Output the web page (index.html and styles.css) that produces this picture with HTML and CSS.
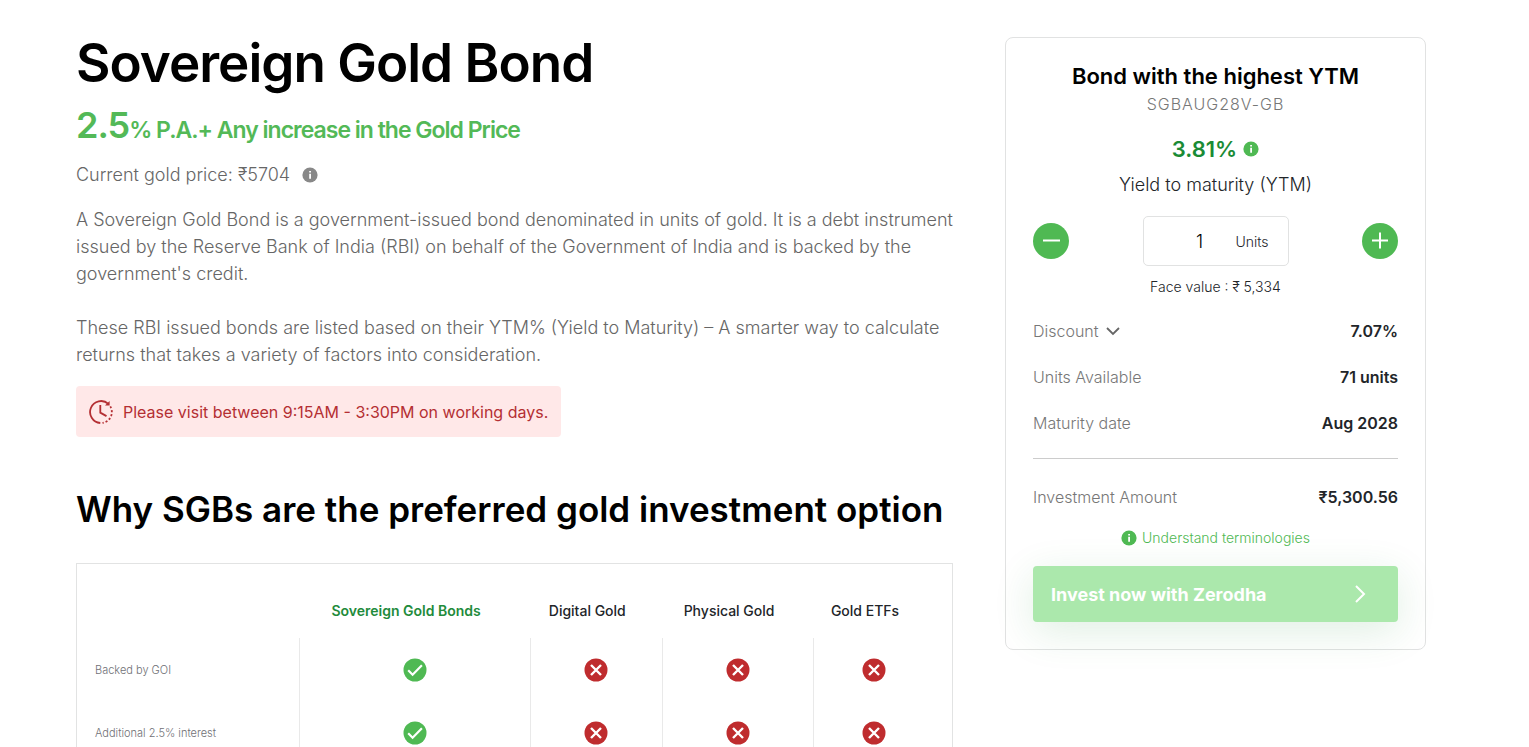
FILE: index.html
```html
<!DOCTYPE html>
<html lang="en">
<head>
<meta charset="utf-8">
<meta name="viewport" content="width=device-width, initial-scale=1">
<title>Sovereign Gold Bond</title>
<link rel="stylesheet" href="styles.css">
</head>
<body>
<svg class="sprite" aria-hidden="true">
  <symbol id="info" viewBox="0 0 16 16"><circle cx="8" cy="8" r="7.6" fill="currentColor"/><path d="M7.2 4h1.8v1.6H7.2zM7.2 6.8h1.8v5H7.2z" fill="#fff"/></symbol>
  <symbol id="check" viewBox="0 0 24 24"><circle cx="12" cy="12" r="11.5" fill="#4fb953"/><path d="M5.2 12.3l4.4 4.4 9.3-9.5" fill="none" stroke="#fff" stroke-width="2.2"/></symbol>
  <symbol id="cross" viewBox="0 0 24 24"><circle cx="12" cy="12" r="11.5" fill="#bf2c2e"/><path d="M7 7l10 10M17 7L7 17" fill="none" stroke="#fff" stroke-width="2.4"/></symbol>
</svg>
<main class="page">
  <section class="intro">
    <h1 class="title">Sovereign Gold Bond</h1>
    <p class="rate"><span class="rate-value">2.5</span>% P.A.+ Any increase in the Gold Price</p>
    <p class="price">Current gold price: ₹5704 <svg class="info info-grey"><use href="#info"/></svg></p>
    <p class="copy">A Sovereign Gold Bond is a government-issued bond denominated in units of gold. It is a debt instrument issued by the Reserve Bank of India (RBI) on behalf of the Government of India and is backed by the government's credit.</p>
    <p class="copy">These RBI issued bonds are listed based on their YTM% (Yield to Maturity) – A smarter way to calculate returns that takes a variety of factors into consideration.</p>
    <div class="notice">
      <svg class="clock" viewBox="0 0 24 24" fill="none" stroke="currentColor" stroke-width="1.8">
        <path d="M11.3 23A11 11 0 1 1 19.4 3.8"/>
        <path d="M21.3 6.4A11 11 0 0 1 13.5 22.9" stroke-dasharray="2 2"/>
        <path d="M20.6 1v4.6h-4.6z" fill="currentColor" stroke="none"/>
        <path d="M11.3 5v7.6l6.2 3.5"/>
      </svg>
      <span>Please visit between 9:15AM - 3:30PM on working days.</span>
    </div>
    <h2 class="subtitle">Why SGBs are the preferred gold investment option</h2>
    <div class="compare-box">
      <table class="compare">
        <colgroup><col class="c-label"><col class="c-bond"><col class="c-digital"><col class="c-physical"><col class="c-etf"></colgroup>
        <thead><tr><td></td><th scope="col" class="best">Sovereign Gold Bonds</th><th scope="col">Digital Gold</th><th scope="col">Physical Gold</th><th scope="col">Gold ETFs</th></tr></thead>
        <tbody>
          <tr><th scope="row">Backed by GOI</th><td><svg class="mark" role="img" aria-label="Yes"><use href="#check"/></svg></td><td><svg class="mark" role="img" aria-label="No"><use href="#cross"/></svg></td><td><svg class="mark" role="img" aria-label="No"><use href="#cross"/></svg></td><td><svg class="mark" role="img" aria-label="No"><use href="#cross"/></svg></td></tr>
          <tr><th scope="row">Additional 2.5% interest</th><td><svg class="mark" role="img" aria-label="Yes"><use href="#check"/></svg></td><td><svg class="mark" role="img" aria-label="No"><use href="#cross"/></svg></td><td><svg class="mark" role="img" aria-label="No"><use href="#cross"/></svg></td><td><svg class="mark" role="img" aria-label="No"><use href="#cross"/></svg></td></tr>
        </tbody>
      </table>
    </div>
  </section>
  <aside class="card">
    <h3 class="card-title">Bond with the highest YTM</h3>
    <p class="code">SGBAUG28V-GB</p>
    <p class="yield">3.81% <svg class="info info-green"><use href="#info"/></svg></p>
    <p class="yield-label">Yield to maturity (YTM)</p>
    <div class="stepper">
      <button class="round" type="button" aria-label="Decrease units"><svg viewBox="0 0 36 36"><path d="M10 17.5h17"/></svg></button>
      <div class="units"><input class="units-input" id="units" type="text" value="1"><label for="units">Units</label></div>
      <button class="round" type="button" aria-label="Increase units"><svg viewBox="0 0 36 36"><path d="M10 17.5h16M18 9.5v16"/></svg></button>
    </div>
    <p class="face">Face value : ₹ 5,334</p>
    <dl class="facts">
      <div class="fact"><dt><button class="toggle" type="button">Discount <svg class="chevron" viewBox="0 0 16 16"><path d="M2 5l6 6 6-6"/></svg></button></dt><dd>7.07%</dd></div>
      <div class="fact"><dt>Units Available</dt><dd>71 units</dd></div>
      <div class="fact"><dt>Maturity date</dt><dd>Aug 2028</dd></div>
      <div class="fact total"><dt>Investment Amount</dt><dd>₹5,300.56</dd></div>
    </dl>
    <a class="terms" href="#"><svg class="info"><use href="#info"/></svg>Understand terminologies</a>
    <button class="invest" type="button">Invest now with Zerodha <svg class="arrow" viewBox="0 0 20 20"><path d="M5 2l8 8-8 8"/></svg></button>
  </aside>
</main>
</body>
</html>
```
FILE: styles.css
```css
* { box-sizing: border-box; }
body { margin: 0; background: #fff; color: #000; font-family: Inter, "Liberation Sans", sans-serif; font-weight: 300; }
h1, h2, h3, p, dl, dd { margin: 0; }
button { font: inherit; border: 0; padding: 0; background: none; color: inherit; cursor: pointer; }
.sprite { position: absolute; width: 0; height: 0; }

.page { display: grid; grid-template-columns: minmax(0, 877fr) minmax(0, 421fr); gap: 52px; align-items: start; padding: 37px 103px 0 76px; }

.title { font-size: 53px; line-height: 52px; font-weight: 600; letter-spacing: -1px; }
.rate { margin-top: 14px; font-size: 23px; line-height: 44px; font-weight: 600; letter-spacing: -1px; color: #53b957; }
.rate-value { font-size: 36px; }
.price { display: flex; align-items: center; gap: 12px; margin-top: 9px; font-size: 18px; line-height: 27px; color: #666; }
.copy { margin-top: 18px; font-size: 18px; line-height: 27px; color: #666; }
.copy + .copy { margin-top: 27px; }
.info { width: 16px; height: 16px; flex: none; color: #4fb953; }
.info-grey { color: #888; }

.notice { display: flex; align-items: center; gap: 10px; width: fit-content; height: 51px; margin-top: 18px; padding: 0 13px; border-radius: 4px; background: #ffe8e8; color: #b42f33; font-size: 16px; font-weight: 400; }
.clock { width: 24px; height: 24px; }

.subtitle { margin-top: 50px; font-size: 35px; line-height: 44px; font-weight: 600; }
.compare-box { margin-top: 32px; padding: 18px 18px 0; border: 1px solid #e2e3e3; }
.compare { width: 100%; table-layout: fixed; border-collapse: collapse; }
.c-label { width: 24.4%; }
.c-bond { width: 27.5%; }
.c-digital { width: 15.7%; }
.c-physical { width: 18.1%; }
.c-etf { width: 14.3%; }
.compare th, .compare td { padding: 0; text-align: center; }
.compare thead th { height: 56px; padding-right: 18px; font-size: 14px; font-weight: 500; color: #222529; }
.compare thead .best { font-weight: 600; color: #228b3b; }
.compare tbody th { height: 63px; text-align: left; font-size: 11px; font-weight: 300; color: #6f7075; }
.compare tbody td { border-left: 1px solid #e9e9e9; }
.mark { display: block; width: 24px; height: 24px; margin: 0 auto; }

.card { display: flex; flex-direction: column; padding: 24px 27px 27px; border: 1px solid #e1e2e2; border-radius: 8px; text-align: center; }
.card-title { font-size: 22px; line-height: 28px; font-weight: 600; }
.code { font-size: 16px; line-height: 28px; letter-spacing: 1px; color: #777; }
.yield { display: flex; align-items: center; justify-content: center; gap: 6px; margin-top: 16px; font-size: 22px; line-height: 30px; font-weight: 600; color: #1a8b35; }
.yield-label { margin-top: 6px; font-size: 18px; line-height: 30px; color: #222529; }
.stepper { display: flex; align-items: center; justify-content: space-between; margin-top: 16px; }
.round { width: 36px; height: 36px; border-radius: 50%; background: #4fb953; }
.round svg { display: block; width: 36px; height: 36px; fill: none; stroke: #fff; stroke-width: 2; }
.units { display: flex; align-items: center; width: 40%; height: 50px; padding: 0 19px 0 20px; border: 1px solid #e1e2e2; border-radius: 5px; font-size: 14px; color: #222529; }
.units-input { flex: 1; min-width: 0; border: 0; padding: 0; background: none; text-align: center; font: inherit; font-size: 18px; }
.face { margin-top: 10px; font-size: 14px; line-height: 22px; color: #222529; }
.facts { margin-top: 10px; font-size: 16px; color: #777; }
.fact { display: flex; align-items: center; justify-content: space-between; height: 46px; }
.fact dd { color: #222529; font-weight: 600; }
.toggle { display: flex; align-items: center; gap: 6px; }
.chevron { width: 16px; height: 16px; fill: none; stroke: #666; stroke-width: 1.8; }
.total { height: 64px; margin-top: 12px; padding-top: 12px; border-top: 1px solid #ccc; }
.terms { display: flex; align-items: center; justify-content: center; gap: 5px; margin-top: 5px; font-size: 14px; line-height: 22px; color: #4fb953; text-decoration: none; }
.invest { display: flex; align-items: center; justify-content: space-between; height: 56px; margin-top: 17px; padding: 0 27px 0 18px; border-radius: 4px; background: #abe8ac; color: #fff; font-size: 18px; font-weight: 700; box-shadow: 0 10px 40px rgba(34, 139, 59, .14); }
.arrow { width: 20px; height: 20px; fill: none; stroke: #fff; stroke-width: 2; }
```
